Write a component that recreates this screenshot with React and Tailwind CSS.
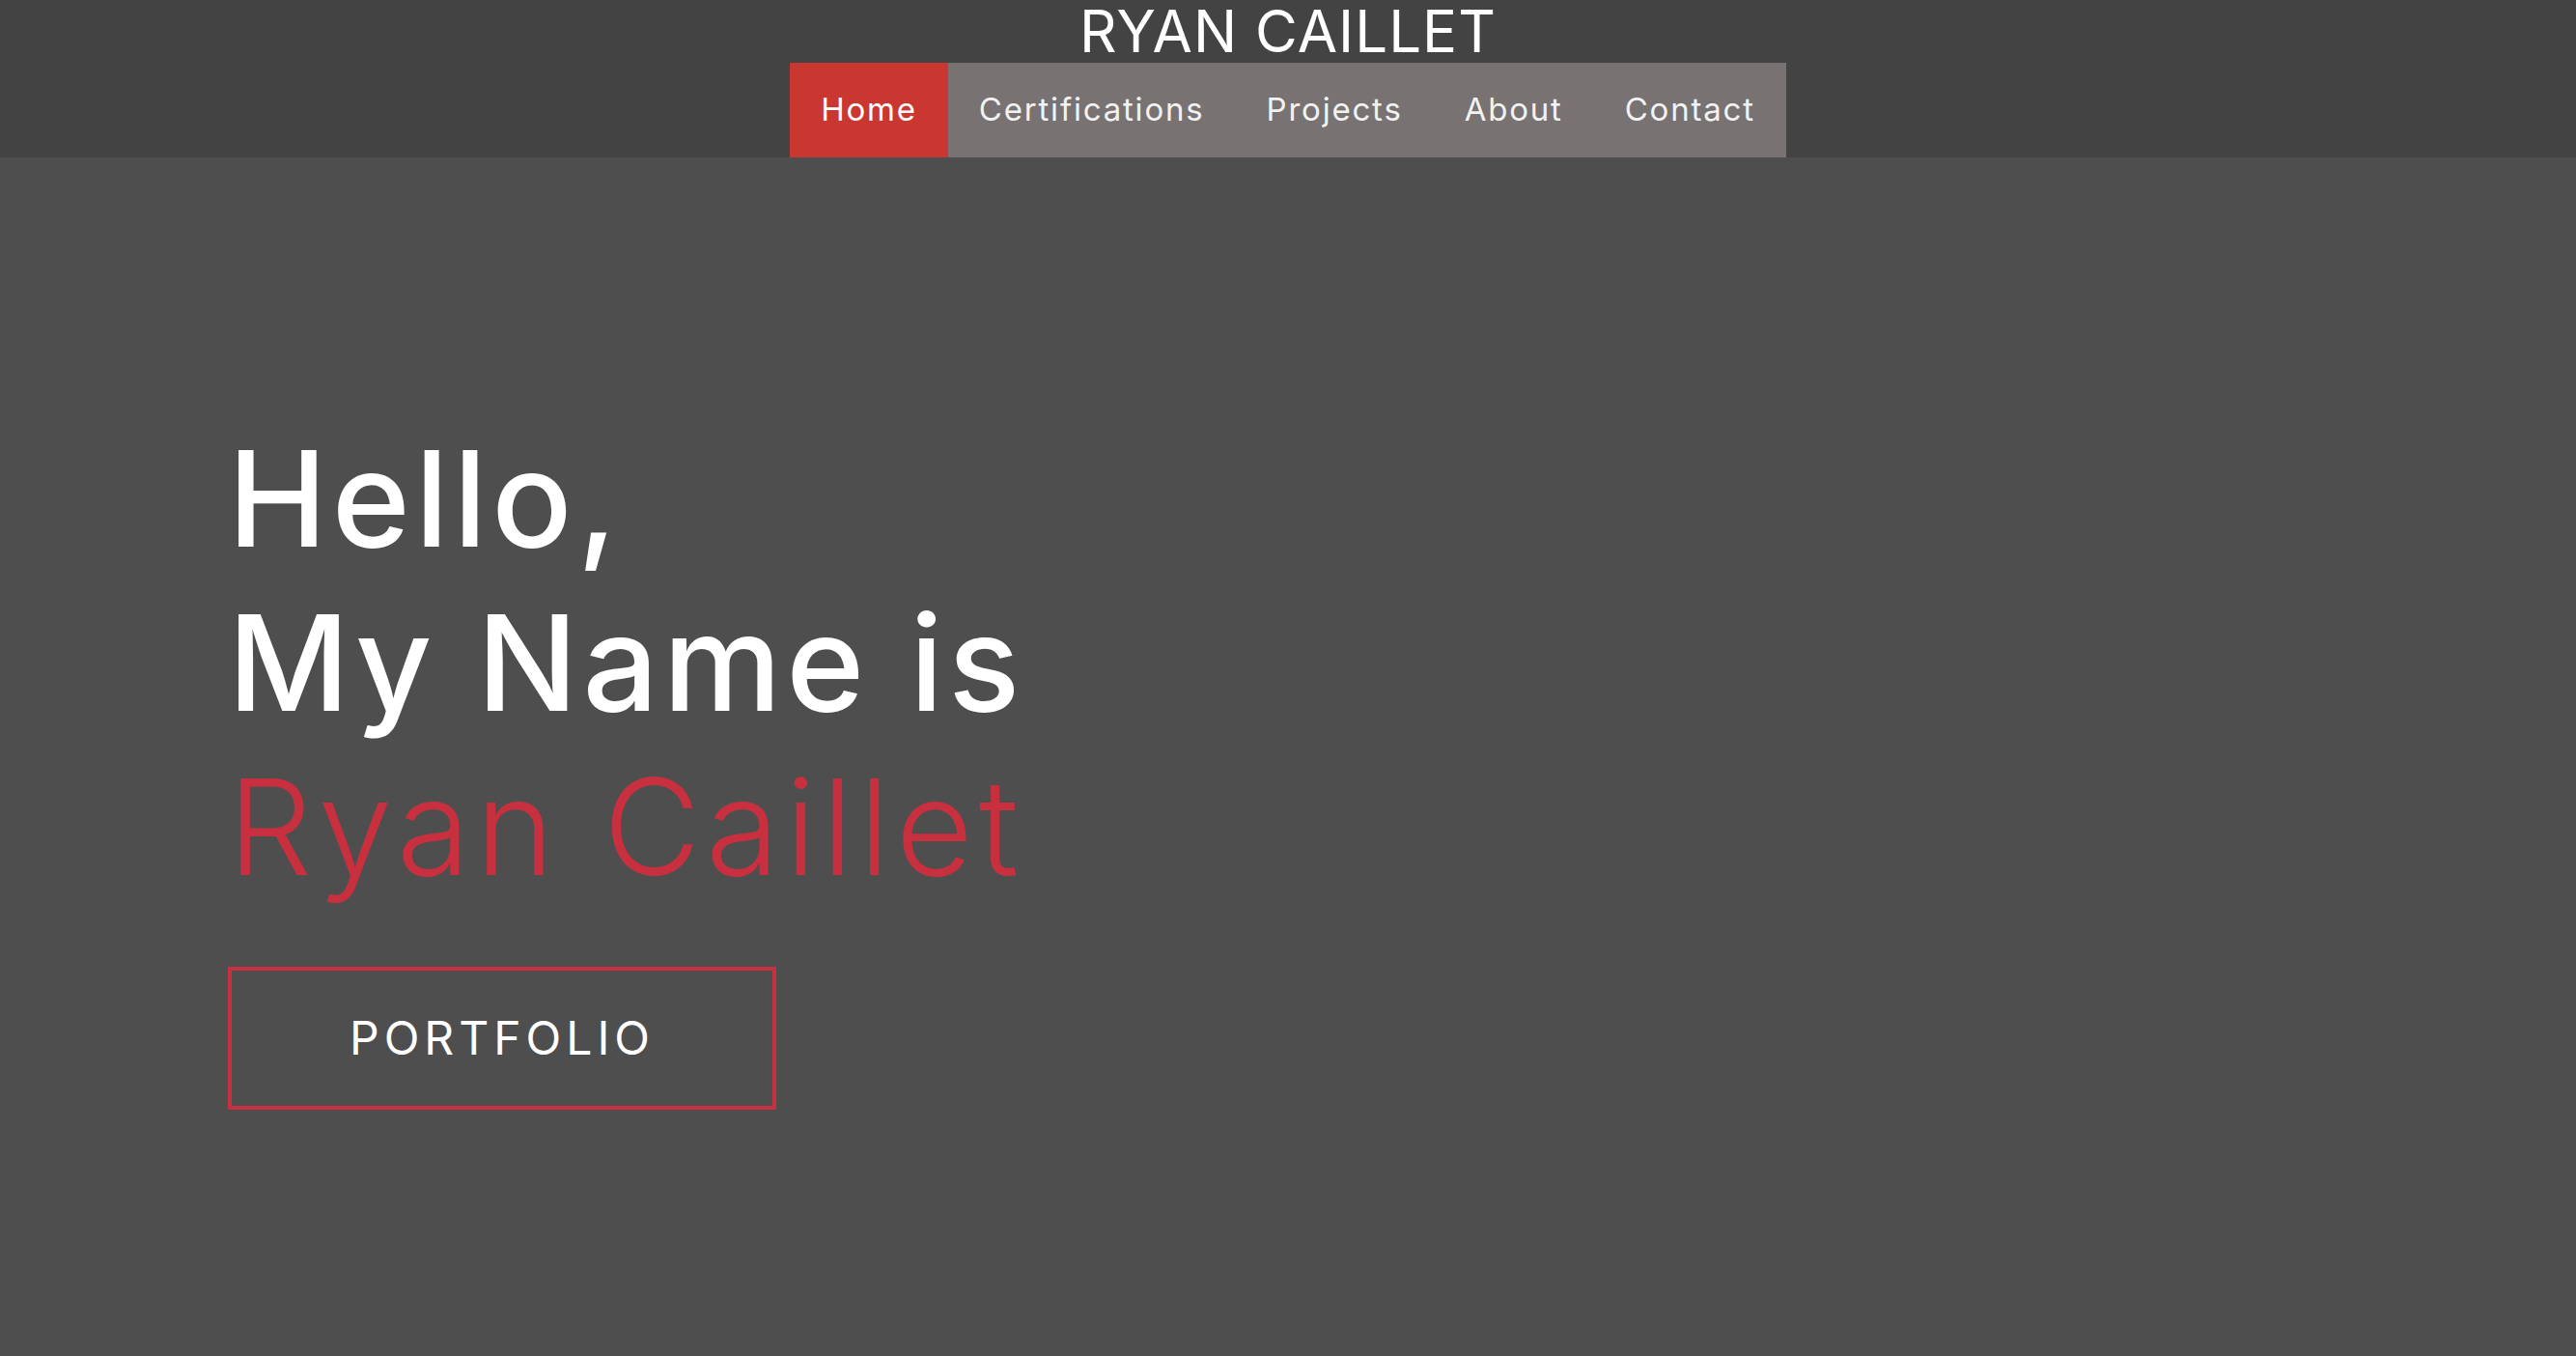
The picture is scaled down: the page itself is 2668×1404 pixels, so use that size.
import React from 'react'

const links = ['Home', 'Certifications', 'Projects', 'About', 'Contact']

export default function App() {
  return (
    <div className="min-h-screen bg-[#4e4e4e] font-['Inter',sans-serif]">
      {/* header */}
      <header className="h-[163px] bg-[#434343] flex flex-col items-center">
        <h1 className="text-[60px] leading-[60px] text-white tracking-[1px] mt-[2px] h-[63px]">RYAN CAILLET</h1>
        <nav className="flex bg-[#787372] h-[98px]">
          {links.map((l, i) => (
            <a
              key={l}
              href="#"
              className={
                'flex items-center px-[32px] text-[33px] tracking-[1.8px] text-[#f2f2f2] ' +
                (i === 0 ? 'bg-[#c93730] text-white' : '')
              }
            >
              {l}
            </a>
          ))}
        </nav>
      </header>

      {/* hero */}
      <main className="pl-[236px] pt-[268px]">
        <div className="text-[138px] leading-[170px] font-medium text-white tracking-[5px]">
          <div>Hello,</div>
          <div>My Name is</div>
          <div className="text-[#c8303f] font-light tracking-[6px]">Ryan Caillet</div>
        </div>
        <button className="mt-[60px] w-[568px] h-[148px] border-4 border-[#c8303f] text-white text-[48px] tracking-[5px]">
          PORTFOLIO
        </button>
      </main>
    </div>
  )
}
